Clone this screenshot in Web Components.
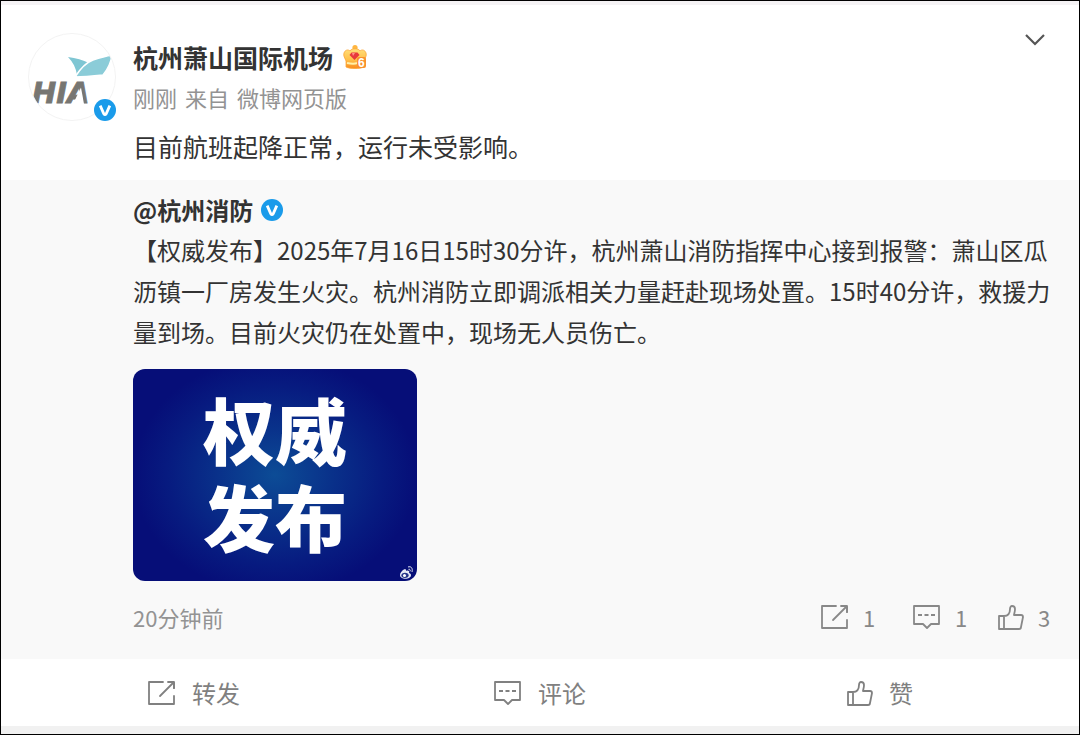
<!DOCTYPE html>
<html lang="zh-CN">
<head>
<meta charset="utf-8">
<meta name="viewport" content="width=device-width, initial-scale=1">
<title>微博</title>
<style>
  body {
    margin: 0;
    background: #fff;
    color: #333;
    font-family: "Noto Sans CJK SC", sans-serif;
  }
</style>
</head>
<body>
<feed-card>
  <post-header slot="header">
    <a slot="name" href="#user">杭州萧山国际机场</a>
    <span slot="time">刚刚</span>
    <span slot="source">来自</span>
    <a slot="source" href="#source">微博网页版</a>
    目前航班起降正常，运行未受影响。
  </post-header>
  <quoted-post slot="quote">
    <a slot="name" href="#quoted">@杭州消防</a>
    【权威发布】2025年7月16日15时30分许，杭州萧山消防指挥中心接到报警：萧山区瓜沥镇一厂房发生火灾。杭州消防立即调派相关力量赶赴现场处置。15时40分许，救援力量到场。目前火灾仍在处置中，现场无人员伤亡。
    <notice-picture slot="media">权威发布</notice-picture>
    <time slot="time">20分钟前</time>
    <action-button slot="stats" icon="share" compact>1</action-button>
    <action-button slot="stats" icon="comment" compact>1</action-button>
    <action-button slot="stats" icon="like" compact>3</action-button>
  </quoted-post>
  <action-button slot="actions" icon="share">转发</action-button>
  <action-button slot="actions" icon="comment">评论</action-button>
  <action-button slot="actions" icon="like">赞</action-button>
</feed-card>

<script>
const define = (name, html, setup) => {
  const template = document.createElement('template');
  template.innerHTML = html;
  customElements.define(name, class extends HTMLElement {
    constructor() {
      super();
      this.attachShadow({ mode: 'open' }).append(template.content.cloneNode(true));
    }
    connectedCallback() { if (setup) setup(this, this.shadowRoot); }
  });
};

const icons = {
  share: [28, 26, '<path d="M15 2H1v22h25v-8M26 8V3"/><path d="M12 16 25 3"/><path d="M20 2h6v6"/>'],
  comment: [28, 26, '<path d="M1 2h25v18h-8l-4 4-4-4H1Z"/><path d="M5 11h4m2.500 0h4m2.500 0h4" stroke-linecap="butt"/>'],
  like: [26, 26, '<path d="M1 12h5v13H1ZM6 12c4 0 6-3 6-7 0-2 1-3 2-3 2 0 3 1 3 3 0 3-1 5-1 6h7c1 0 2 1 2 2l-2 10c0 1-1 2-2 2H6"/>']
};

/* Line icon, chosen by its name attribute */
define('line-icon', `
  <style>
    :host { display: block; flex: none; }
    svg { display: block; fill: none; stroke: currentColor; stroke-width: 1.8; stroke-linejoin: round; stroke-linecap: round; }
  </style>`, (el, root) => {
  if (root.querySelector('svg')) return;
  const [w, h, body] = icons[el.getAttribute('name')];
  root.innerHTML += `<svg width="${w}" height="${h}" viewBox="0 0 ${w} ${h}" aria-hidden="true">${body}</svg>`;
});

/* Blue verification mark */
define('verified-mark', `
  <style>:host { display: block; flex: none; } svg { display: block; }</style>
  <svg width="22" height="22" viewBox="0 0 22 22" aria-hidden="true">
    <circle cx="11" cy="11" r="11" fill="#1a9bea"/>
    <path d="M6.2 6.6 9.8 14.8Q11 16.6 12.2 14.8L15.8 6.6" fill="none" stroke="#fff" stroke-width="2.8"/>
  </svg>`);

/* Membership crown, level 6 */
define('member-crown', `
  <style>:host { display: block; flex: none; } svg { display: block; }</style>
  <svg width="24" height="26" viewBox="0 0 24 26" aria-hidden="true">
    <defs><linearGradient id="g" x1="0" y1="0" x2="0" y2="1">
      <stop offset="0" stop-color="#ffe07a"/><stop offset=".55" stop-color="#ffc04a"/><stop offset="1" stop-color="#f98a1d"/>
    </linearGradient></defs>
    <circle cx="12" cy="3.600" r="2.600" fill="#ffb640"/>
    <path d="M1 9c1-3 4-4 6-2 1-3 9-3 10 0 2-2 5-1 6 2 1 3-1 5-2 8v6c-4 2-14 2-18 0v-6C2 14 0 12 1 9Z" fill="url(#g)" stroke="#fba63a" stroke-width=".8"/>
    <path d="M4 19c5 1 8 1 10 0" stroke="#fff0a8" stroke-width="2" fill="none"/>
    <path d="M8.500 8.500h6l2 2.500-5 5-5-5Z" fill="#e8383c"/>
    <path d="M9 9h3l-2 3Z" fill="#ff8f8a"/>
    <rect x="14" y="13" width="9" height="11" rx="2" fill="#f9912d"/>
    <text x="15" y="23" font-family="Liberation Sans, sans-serif" font-size="12" font-weight="700" fill="#fff">6</text>
  </svg>`);

/* Airport avatar with its verification mark */
define('user-avatar', `
  <style>
    :host { display: block; position: relative; flex: none; width: 88px; height: 88px; }
    svg { display: block; }
    verified-mark { position: absolute; right: 0; bottom: 0; }
  </style>
  <svg width="88" height="88" viewBox="0 0 88 88" role="img" aria-label="HIA">
    <defs><clipPath id="c"><circle cx="44" cy="44" r="43"/></clipPath></defs>
    <circle cx="44" cy="44" r="43.500" fill="#fff" stroke="#f3f3f3"/>
    <g clip-path="url(#c)">
      <path d="M40 24c8 1 15 3 21 6-4 3-8 7-12 12-1-7-4-13-9-18Z" fill="#7fc6d3"/>
      <path d="M47 44c5-8 10-14 18-17 6-2 13-4 19-5-1 8-5 15-9 20-9 1-18 2-28 2Z" fill="#8bccd8" stroke="#fff" stroke-width="1.500"/>
      <text x="4" y="70" font-family="DejaVu Sans, sans-serif" font-size="29" font-weight="700" font-style="oblique" fill="#777672" stroke="#777672" stroke-width=".8">HIA</text>
      <path d="M45 71 53 54.500 56 71Z" fill="#fff"/>
    </g>
  </svg>
  <verified-mark></verified-mark>`);

define('post-header', `
  <style>
    :host { display: flex; align-items: flex-start; gap: 17px; padding: 28px 29px 14px 27px; }
    .main { flex: 1; min-width: 0; padding-top: 4px; }
    .name { display: flex; align-items: center; gap: 10px; font-size: 25px; line-height: 40px; font-weight: 700; }
    .meta { display: flex; gap: 8px; font-size: 22px; line-height: 40px; color: #939393; }
    .text { margin: 9px 0 0; font-size: 25px; line-height: 40px; }
    ::slotted(a) { color: inherit; text-decoration: none; }
    button { flex: none; padding: 0 4px; border: 0; background: none; color: #555; }
    button svg { display: block; }
  </style>
  <user-avatar></user-avatar>
  <div class="main">
    <div class="name"><slot name="name"></slot><member-crown></member-crown></div>
    <div class="meta"><slot name="time"></slot><slot name="source"></slot></div>
    <p class="text"><slot></slot></p>
  </div>
  <button type="button" aria-label="更多">
    <svg width="22" height="14" viewBox="0 0 22 14" fill="none" stroke="currentColor" stroke-width="2.200"><path d="m2 2 9 9 9-9"/></svg>
  </button>`);

/* Blue announcement picture, two characters to a line */
define('notice-picture', `
  <style>
    :host {
      position: relative; display: flex; align-items: center; justify-content: center;
      box-sizing: border-box; width: 284px; height: 212px; padding-bottom: 8px;
      border-radius: 12px; overflow: hidden; color: #fff;
      background: radial-gradient(ellipse 50% 56% at 50% 50%, #0c4c96 0%, #09318a 40%, #071b80 75%, #060e78 100%);
      font-size: 72px; line-height: 87px; font-weight: 900;
    }
    div { width: 2em; }
    svg { position: absolute; right: 3px; bottom: 1px; }
  </style>
  <div><slot></slot></div>
  <svg width="15" height="14" viewBox="0 0 15 14" aria-hidden="true">
    <path d="M6 3C3 4 1 7 1 9c0 5 11 5 11 0 0-1-1-2-2-2 1-2-1-3-3-2 0-1 0-2-1-2Z" fill="#e4e8f4"/>
    <ellipse cx="6" cy="9.300" rx="3.600" ry="2.600" fill="#26358a"/>
    <circle cx="5.500" cy="9.500" r="1.500" fill="#fff"/>
    <path d="M9 1c3-1 5 1 4 5M9.500 3.300c1.500-.3 2 .7 1.600 2" fill="none" stroke="#e4e8f4" stroke-width="1"/>
  </svg>`);

define('quoted-post', `
  <style>
    :host { display: block; padding: 10px 20px 22px 132px; background: #f9f9f9; }
    .name { display: flex; align-items: center; gap: 8px; font-size: 24px; line-height: 39px; font-weight: 700; }
    .text { margin: 0 0 17px; font-size: 24px; line-height: 41px; }
    ::slotted(a) { color: inherit; text-decoration: none; }
    footer { display: flex; align-items: center; justify-content: space-between; padding: 16px 8px 0 0; font-size: 22px; line-height: 40px; color: #939393; }
    .stats { display: grid; grid-template-columns: 92px 85px 53px; }
  </style>
  <div class="name"><slot name="name"></slot><verified-mark></verified-mark></div>
  <p class="text"><slot></slot></p>
  <slot name="media"></slot>
  <footer><slot name="time"></slot><div class="stats"><slot name="stats"></slot></div></footer>`);

/* Icon button: wide with a label, or compact with a count */
define('action-button', `
  <style>
    :host { display: block; }
    button {
      display: flex; align-items: center; justify-content: center; gap: 16px; width: 100%;
      margin: 0; padding: 0; border: 0; background: none; color: #808080;
      font: inherit; font-size: 24px; line-height: 67px; cursor: pointer;
    }
    span { min-width: 36px; text-align: left; }
    :host([compact]) button { justify-content: flex-start; gap: 14px; font-size: 22px; line-height: 40px; color: #888; }
    :host([compact]) span { min-width: 0; }
  </style>
  <button type="button"><span><slot></slot></span></button>`, (el, root) => {
  if (root.querySelector('line-icon')) return;
  const icon = document.createElement('line-icon');
  icon.setAttribute('name', el.getAttribute('icon'));
  root.querySelector('button').prepend(icon);
});

define('feed-card', `
  <style>
    :host { display: block; border: 1px solid #000; background: #fff; }
    article { border-top: 4px solid #f5f3f5; border-bottom: 8px solid #f1f1f1; }
    nav { display: grid; grid-template-columns: repeat(3, 1fr); padding: 0 20px; }
  </style>
  <article>
    <slot name="header"></slot>
    <slot name="quote"></slot>
    <nav aria-label="操作"><slot name="actions"></slot></nav>
  </article>`);
</script>
</body>
</html>
